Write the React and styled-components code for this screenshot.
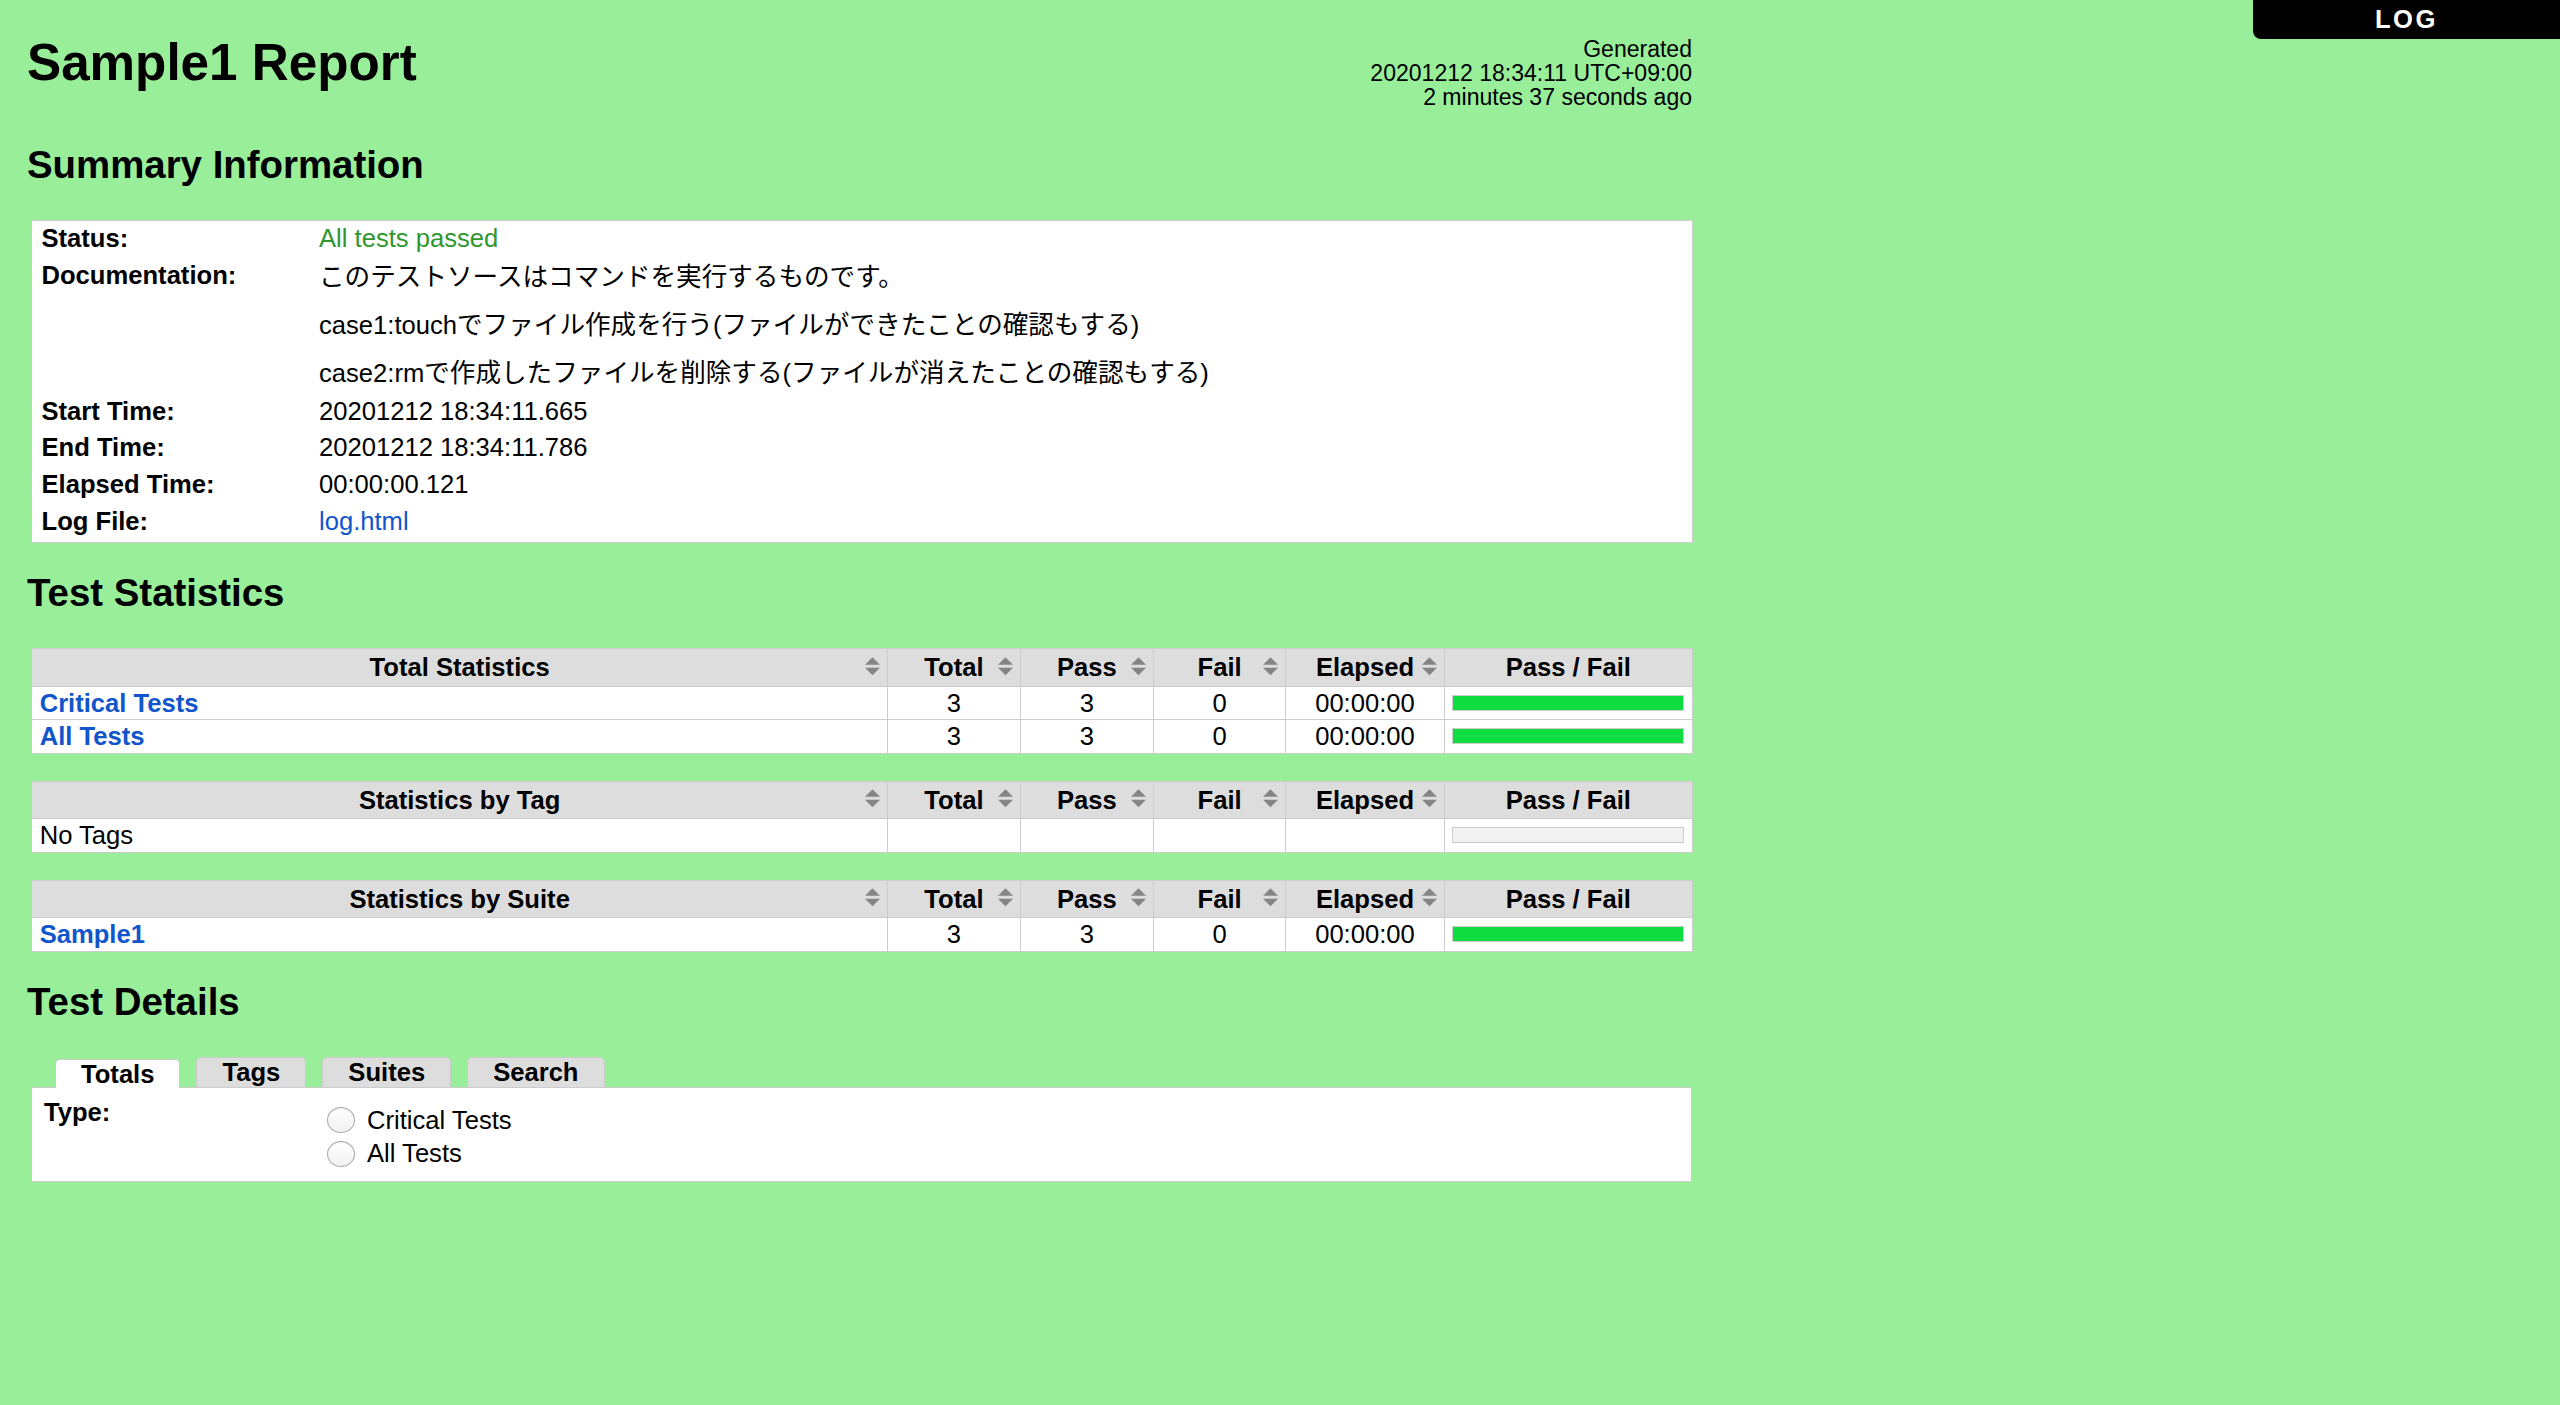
import React from "react";
import styled, { createGlobalStyle } from "styled-components";

const GlobalStyle = createGlobalStyle`
	html, body {
		margin: 0;
		padding: 0;
		background: #99ee99;
	}
	body {
		color: black;
		font-family: "Liberation Sans", Helvetica, Arial, "Noto Sans CJK JP", sans-serif;
		font-size: 25.6px;
		min-height: 1405px;
	}
	a {
		color: #15c;
		text-decoration: none;
	}
`;

const Page = styled.div`
	padding: 0 0 40px 27px;
`;

const Header = styled.div`
	display: flex;
	justify-content: space-between;
	align-items: flex-start;
	width: 1665px;
	height: 115px;
`;

const Title = styled.h1`
	margin: 32.8px 0 0;
	font-size: 51.2px;
	line-height: 59px;
	font-weight: bold;
`;

const Generated = styled.div`
	margin-top: 38.4px;
	font-size: 23.04px;
	line-height: 23.7px;
	text-align: right;
	white-space: nowrap;
`;

const LogLink = styled.a`
	position: fixed;
	top: 0;
	right: 0;
	width: 307px;
	display: block;
	background: black;
	&&, &&:visited {
		color: white;
	}
	font-weight: bold;
	letter-spacing: 0.1em;
	text-align: center;
	padding: 7.2px 0 8.2px;
	line-height: 24px;
	border-bottom-left-radius: 8px;
	z-index: 10;
`;

const SectionTitle = styled.h2`
	margin: 28px 0 33px;
	font-size: 38.4px;
	line-height: 44px;
	font-weight: bold;
`;

/* summary */
const SummaryBox = styled.div`
	width: 1662px;
	box-sizing: border-box;
	margin-left: 4px;
	background: white;
	border: 1px solid #ccc;
	padding: 0 10px 2px 9.5px;
`;

const MetaTable = styled.table`
	border-collapse: collapse;
	width: 100%;
`;

const MetaLabel = styled.th`
	width: 277.5px;
	padding: 0 0 2px;
	text-align: left;
	vertical-align: top;
	line-height: 34.6px;
	font-weight: bold;
`;

const MetaValue = styled.td`
	padding: ${(p) => (p.$doc ? "0" : "0 0 2px")};
	vertical-align: top;
	line-height: 34.6px;
	color: ${(p) => (p.$pass ? "#2f972f" : "inherit")};
`;

const DocParagraph = styled.p`
	margin: 0 0 9.9px;
	line-height: 38.4px;
	&:last-child {
		margin-bottom: 1.3px;
	}
`;

/* statistics */
const StatsTable = styled.table`
	width: 1662px;
	margin: 0 0 27px 4px;
	border-collapse: collapse;
	background: white;
`;

const StatHead = styled.th`
	position: relative;
	width: ${(p) => p.$w || "auto"};
	padding: 0 7.68px;
	background: #ddd;
	border: 1px solid #ccc;
	line-height: 36.7px;
	font-weight: bold;
	text-align: center;
	white-space: nowrap;
`;

const StatCell = styled.td`
	padding: 0 7.68px;
	border: 1px solid #ccc;
	line-height: 32.3px;
	text-align: ${(p) => p.$align || "center"};
	vertical-align: middle;
	white-space: nowrap;
`;

const StatName = styled.a`
	font-weight: bold;
`;

const SortIcon = styled.svg`
	position: absolute;
	right: 7px;
	top: 50%;
	transform: translateY(-60%);
`;

const Graph = styled.div`
	display: flex;
	height: 14px;
	border: 1px solid #ccc;
	background: #f2f2f2;
`;

const PassBar = styled.div`
	height: 100%;
	background: #10dd42;
`;

/* details */
const TabList = styled.div`
	position: relative;
	z-index: 1;
	display: flex;
	align-items: flex-end;
	gap: 16px;
	margin: 0 0 -1px 28px;
`;

const Tab = styled.div`
	padding: 0 25px;
	border: 1px solid #ccc;
	border-bottom: ${(p) => (p.$active ? "none" : "1px solid #ccc")};
	border-radius: 5px 5px 0 0;
	background: ${(p) => (p.$active ? "white" : "#ddd")};
	line-height: ${(p) => (p.$active ? "28px" : "29px")};
	font-weight: bold;
	cursor: pointer;
`;

const DetailsBox = styled.div`
	display: flex;
	width: 1661px;
	box-sizing: border-box;
	margin-left: 4px;
	padding: 7px 10px 10px 12px;
	background: white;
	border: 1px solid #ccc;
`;

const TypeLabel = styled.div`
	width: 283px;
	line-height: 34.6px;
	font-weight: bold;
`;

const RadioList = styled.div`
	margin-top: 9px;
`;

const RadioRow = styled.label`
	display: flex;
	align-items: center;
	height: 33.6px;
	line-height: 33.6px;
`;

const Radio = styled.input.attrs({ type: "radio", name: "totals-type" })`
	appearance: none;
	box-sizing: border-box;
	width: 28px;
	height: 26px;
	margin: 0 12px 0 0;
	border-radius: 50%;
	border: 1px solid #a9a9a9;
	background: linear-gradient(#ffffff, #f1f1f1);
	box-shadow: inset 0 1px 1px rgba(0, 0, 0, 0.08);
`;

const Sort = () => (
	<SortIcon width="15" height="18" viewBox="0 0 15 18">
		<path d="M7.5 0L15 7.5H0Z" fill="#858585" />
		<path d="M0 10.5H15L7.5 18Z" fill="#858585" />
	</SortIcon>
);

const statTables = [
	{
		title: "Total Statistics",
		rows: [
			{ name: "Critical Tests", link: true, total: 3, pass: 3, fail: 0, elapsed: "00:00:00" },
			{ name: "All Tests", link: true, total: 3, pass: 3, fail: 0, elapsed: "00:00:00" }
		]
	},
	{
		title: "Statistics by Tag",
		rows: [{ name: "No Tags", link: false }]
	},
	{
		title: "Statistics by Suite",
		rows: [{ name: "Sample1", link: true, total: 3, pass: 3, fail: 0, elapsed: "00:00:00" }]
	}
];

const StatisticsTable = ({ title, rows }) => (
	<StatsTable>
		<thead>
			<tr>
				<StatHead>
					{title}
					<Sort />
				</StatHead>
				<StatHead $w="116px">
					Total
					<Sort />
				</StatHead>
				<StatHead $w="117px">
					Pass
					<Sort />
				</StatHead>
				<StatHead $w="116px">
					Fail
					<Sort />
				</StatHead>
				<StatHead $w="142px">
					Elapsed
					<Sort />
				</StatHead>
				<StatHead $w="232px">Pass / Fail</StatHead>
			</tr>
		</thead>
		<tbody>
			{rows.map((row) => (
				<tr key={row.name}>
					<StatCell $align="left">
						{row.link ? <StatName href="#">{row.name}</StatName> : row.name}
					</StatCell>
					<StatCell>{row.total}</StatCell>
					<StatCell>{row.pass}</StatCell>
					<StatCell>{row.fail}</StatCell>
					<StatCell>{row.elapsed}</StatCell>
					<StatCell>
						<Graph>
							{row.total ? (
								<PassBar style={{ width: `${(row.pass / row.total) * 100}%` }} />
							) : null}
						</Graph>
					</StatCell>
				</tr>
			))}
		</tbody>
	</StatsTable>
);

const App = () => {
	return (
		<Page>
			<GlobalStyle />
			<LogLink href="#">LOG</LogLink>
			<Header>
				<Title>Sample1 Report</Title>
				<Generated>
					Generated
					<br />
					20201212 18:34:11 UTC+09:00
					<br />2 minutes 37 seconds ago
				</Generated>
			</Header>

			<SectionTitle>Summary Information</SectionTitle>
			<SummaryBox>
				<MetaTable>
					<tbody>
						<tr>
							<MetaLabel>Status:</MetaLabel>
							<MetaValue $pass>All tests passed</MetaValue>
						</tr>
						<tr>
							<MetaLabel>Documentation:</MetaLabel>
							<MetaValue $doc>
								<DocParagraph>このテストソースはコマンドを実行するものです。</DocParagraph>
								<DocParagraph>
									case1:touchでファイル作成を行う(ファイルができたことの確認もする)
								</DocParagraph>
								<DocParagraph>
									case2:rmで作成したファイルを削除する(ファイルが消えたことの確認もする)
								</DocParagraph>
							</MetaValue>
						</tr>
						<tr>
							<MetaLabel>Start Time:</MetaLabel>
							<MetaValue>20201212 18:34:11.665</MetaValue>
						</tr>
						<tr>
							<MetaLabel>End Time:</MetaLabel>
							<MetaValue>20201212 18:34:11.786</MetaValue>
						</tr>
						<tr>
							<MetaLabel>Elapsed Time:</MetaLabel>
							<MetaValue>00:00:00.121</MetaValue>
						</tr>
						<tr>
							<MetaLabel>Log File:</MetaLabel>
							<MetaValue>
								<a href="#">log.html</a>
							</MetaValue>
						</tr>
					</tbody>
				</MetaTable>
			</SummaryBox>

			<SectionTitle>Test Statistics</SectionTitle>
			{statTables.map((t) => (
				<StatisticsTable key={t.title} title={t.title} rows={t.rows} />
			))}

			<SectionTitle>Test Details</SectionTitle>
			<TabList>
				<Tab $active>Totals</Tab>
				<Tab>Tags</Tab>
				<Tab>Suites</Tab>
				<Tab>Search</Tab>
			</TabList>
			<DetailsBox>
				<TypeLabel>Type:</TypeLabel>
				<RadioList>
					<RadioRow>
						<Radio />
						Critical Tests
					</RadioRow>
					<RadioRow>
						<Radio />
						All Tests
					</RadioRow>
				</RadioList>
			</DetailsBox>
		</Page>
	);
};

export default App;
